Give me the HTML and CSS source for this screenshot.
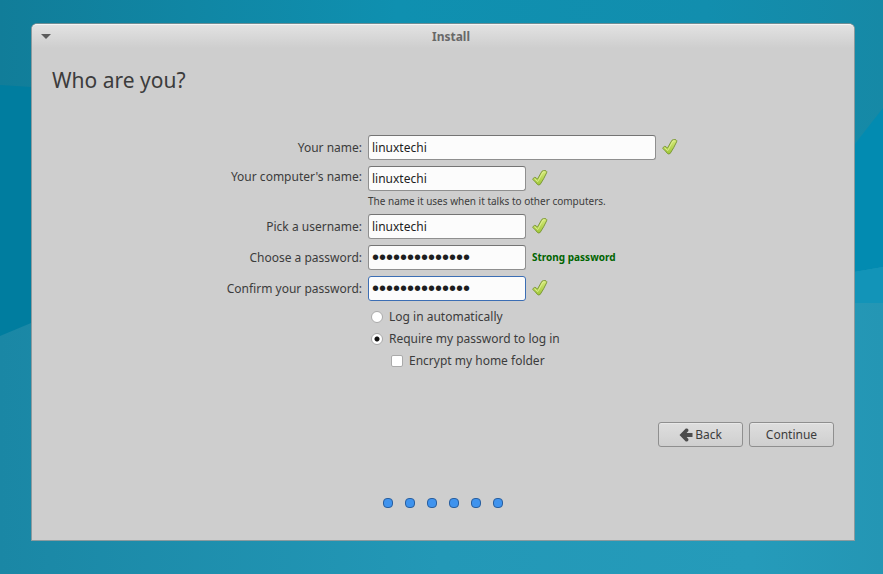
FILE: index.html
```html
<!DOCTYPE html>
<html lang="en">
<head>
<meta charset="utf-8">
<title>Install</title>
<link rel="stylesheet" href="styles.css">
</head>
<body>
<svg class="wallpaper" viewBox="0 0 883 574" preserveAspectRatio="none" aria-hidden="true">
  <defs>
    <linearGradient id="top" x1="0" y1="0" x2="1" y2="0">
      <stop offset="0" stop-color="#117d99"/>
      <stop offset=".45" stop-color="#0f90b0"/>
      <stop offset=".8" stop-color="#128eae"/>
      <stop offset="1" stop-color="#1689a6"/>
    </linearGradient>
    <linearGradient id="bottom" x1="0" y1="0" x2="1" y2="0">
      <stop offset="0" stop-color="#1a87a5"/>
      <stop offset=".5" stop-color="#2398b7"/>
      <stop offset=".85" stop-color="#259bba"/>
      <stop offset="1" stop-color="#2496b4"/>
    </linearGradient>
  </defs>
  <rect width="883" height="574" fill="url(#bottom)"/>
  <path d="M0 0H883V110L855 144V300H0Z" fill="url(#top)"/>
  <path d="M0 85L31 87V323L0 336Z" fill="#007d9f"/>
  <path d="M883 108L854 145V272L883 267Z" fill="#028bb1"/>
  <path d="M854 272L883 267V303H854Z" fill="#1294b8"/>
</svg>
<svg class="sprite" aria-hidden="true">
  <defs>
    <linearGradient id="leaf" x1="0" y1="0" x2="0" y2="1">
      <stop offset="0" stop-color="#d6e97a"/>
      <stop offset="1" stop-color="#a0c838"/>
    </linearGradient>
  </defs>
  <symbol id="tick" viewBox="0 0 16 16">
    <path d="M.8 9.4Q1 8 2.6 7.4Q4.2 7.2 5.4 9.2L10 1.2Q11.4 .2 14 .8Q15.2 1.4 14.6 2.8Q11.8 9 8.2 14.4Q6.8 15.6 5.4 14.4Q3.6 12 .8 9.4Z" fill="url(#leaf)" stroke="#7d9a38" stroke-width="1" stroke-linejoin="round"/>
    <path d="M2.6 8.7L5.7 11.6L11 2L13 1.8" fill="none" stroke="#e2f09a" stroke-width=".8"/>
  </symbol>
</svg>

<main class="window">
  <header class="titlebar">
    <button class="menu" type="button" aria-label="Window menu"></button>
    <span class="caption">Install</span>
  </header>
  <form class="page">
    <h1>Who are you?</h1>
    <div class="fields">
      <label for="name">Your name:</label>
      <div class="entry"><input class="box wide" id="name" type="text" value="linuxtechi"><svg class="tick"><use href="#tick"/></svg></div>

      <label class="lead" for="host">Your computer's name:</label>
      <div class="stack">
        <div class="entry"><input class="box" id="host" type="text" value="linuxtechi"><svg class="tick"><use href="#tick"/></svg></div>
        <p class="hint">The name it uses when it talks to other computers.</p>
      </div>

      <label for="user">Pick a username:</label>
      <div class="entry"><input class="box" id="user" type="text" value="linuxtechi"><svg class="tick"><use href="#tick"/></svg></div>

      <label for="pass">Choose a password:</label>
      <div class="entry"><input class="box secret" id="pass" type="password" value="linuxtechi1234"><strong class="strength">Strong password</strong></div>

      <label for="confirm">Confirm your password:</label>
      <div class="entry"><input class="box secret active" id="confirm" type="password" value="linuxtechi1234"><svg class="tick"><use href="#tick"/></svg></div>

      <div class="options">
        <label class="option"><input type="radio" name="login">Log in automatically</label>
        <label class="option"><input type="radio" name="login" checked>Require my password to log in</label>
        <label class="option nested"><input type="checkbox">Encrypt my home folder</label>
      </div>
    </div>
    <div class="actions">
      <button class="button" type="button"><svg class="arrow" viewBox="0 0 14 14" aria-hidden="true"><path d="M.5 7L6.8 .6Q8.8 .2 9.4 1.8V3L7.6 5H13.5V9H7.6L9.4 11V12.2Q8.8 13.8 6.8 13.4Z" fill="#4c4c4c"/></svg>Back</button>
      <button class="button" type="button">Continue</button>
    </div>
    <div class="steps" aria-hidden="true"><i></i><i></i><i></i><i></i><i></i><i></i></div>
  </form>
</main>
</body>
</html>
```
FILE: styles.css
```css
* {
  box-sizing: border-box;
}

body {
  margin: 0;
  min-height: 100vh;
  padding: 23px 28px 33px 31px;
  display: flex;
  background: #1a8fae;
  color: #3c3c3c;
  font: 12px/16px "Noto Sans", sans-serif;
}

.wallpaper {
  position: absolute;
  inset: 0;
  z-index: -1;
  width: 100%;
  height: 100%;
}

.sprite {
  position: absolute;
  width: 0;
  height: 0;
}

.window {
  flex: 1;
  display: flex;
  flex-direction: column;
  border: 1px solid #8b9a9e;
  border-top-color: #6f8d94;
  border-radius: 6px 6px 0 0;
  background: #cecece;
}

.titlebar {
  display: grid;
  grid-template-columns: 28px 1fr 12px;
  align-items: center;
  height: 24px;
  border-top: 1px solid #f4f4f4;
  border-radius: 5px 5px 0 0;
  background: linear-gradient(#e2e2e2, #cecece);
}

.menu {
  justify-self: center;
  width: 10px;
  height: 5px;
  padding: 0;
  border: 0;
  background: #5c5c5c;
  clip-path: polygon(0 0, 100% 0, 50% 100%);
}

.caption {
  text-align: center;
  font-weight: 700;
  color: #686868;
}

.page {
  flex: 1;
  display: flex;
  flex-direction: column;
  padding: 18px 20px 32px;
}

h1 {
  margin: 0 0 41px;
  font-size: 21px;
  line-height: 28px;
  font-weight: 400;
}

.fields {
  display: grid;
  grid-template-columns: 310px 1fr;
  gap: 6px;
  align-items: center;
}

.fields > label {
  text-align: right;
}

.fields > .lead {
  align-self: start;
  margin-top: 3px;
}

.entry {
  display: flex;
  align-items: center;
  gap: 6px;
}

.box {
  width: 158px;
  height: 25px;
  padding: 0 3px;
  border: 1px solid #8f8f8f;
  border-top-color: #747474;
  border-radius: 3px;
  outline: 0;
  background: #fcfcfc;
  color: #1e1e1e;
  font: inherit;
}

.wide {
  width: 288px;
}

.secret {
  font: 20px "Liberation Sans", sans-serif;
}

.active {
  border-color: #3c6eb4;
}

.tick {
  width: 16px;
  height: 16px;
  margin-bottom: 2px;
}

.hint {
  margin: 3px 0 0;
  font-size: 10px;
  line-height: 14px;
}

.strength {
  margin-bottom: 2px;
  font-size: 10px;
  color: #006400;
}

.options {
  grid-column: 2;
  display: grid;
  gap: 6px;
  padding-left: 3px;
  margin-top: 2px;
}

.option {
  display: flex;
  align-items: center;
  gap: 6px;
}

.nested {
  padding-left: 20px;
}

.option input {
  appearance: none;
  width: 12px;
  height: 12px;
  margin: 0;
  border: 1px solid #aaa;
  border-radius: 2px;
  background: #fff;
}

.option input[type="radio"] {
  border-radius: 50%;
}

.option input:checked {
  background: radial-gradient(circle, #111 2px, #fff 3px);
}

.actions {
  display: flex;
  justify-content: flex-end;
  gap: 6px;
  margin-top: auto;
}

.button {
  display: flex;
  align-items: center;
  justify-content: center;
  gap: 2px;
  width: 85px;
  height: 25px;
  padding: 0;
  border: 1px solid #8f8f8f;
  border-radius: 3px;
  background: linear-gradient(#dedede, #cfcfcf);
  box-shadow: inset 0 1px #e8e8e8;
  color: #3c3c3c;
  font: inherit;
}

.arrow {
  width: 14px;
  height: 14px;
}

.steps {
  display: flex;
  justify-content: center;
  gap: 12px;
  margin-top: 51px;
}

.steps i {
  width: 10px;
  height: 10px;
  border: 1px solid #2a5f9e;
  border-radius: 4px;
  background: #3f93ee;
}
```
